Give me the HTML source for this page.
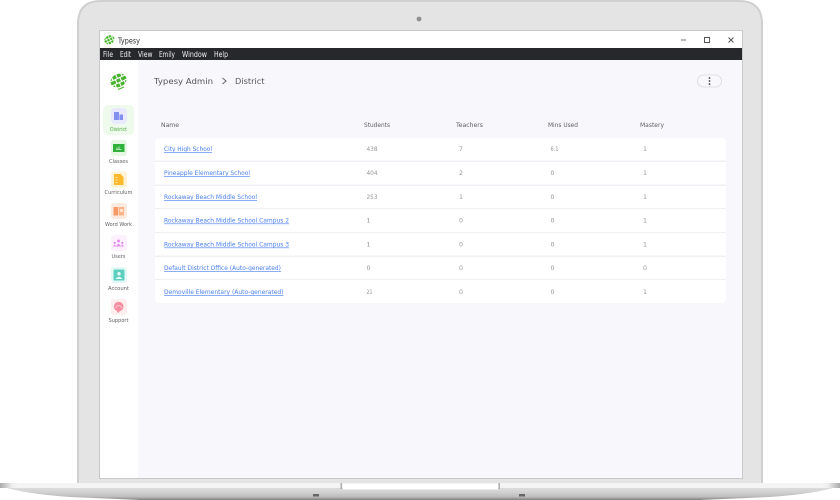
<!DOCTYPE html>
<html><head><meta charset="utf-8"><style>
html,body{margin:0;padding:0;background:#fff;width:840px;height:500px;overflow:hidden}
svg{display:block;filter:blur(.25px)}
text{font-family:"DejaVu Sans","Liberation Sans",sans-serif}
.lnk{fill:#4a7ff0;font-size:6.3px;text-decoration:underline}
.h{fill:#5f5f66;font-size:6.3px}
.c{fill:#96969a;font-size:6.3px}
.s{fill:#5f5f63;font-size:5.3px;text-anchor:middle}
.m{fill:#f0f0f2;font-size:7.6px}
</style></head><body>
<svg width="840" height="500" viewBox="0 0 840 500" xmlns="http://www.w3.org/2000/svg">
<defs>
<linearGradient id="base" x1="0" y1="0" x2="0" y2="1"><stop offset="0" stop-color="#e6e6e6"/><stop offset=".5" stop-color="#d2d2d2"/><stop offset=".8" stop-color="#bcbcbc"/><stop offset="1" stop-color="#808080"/></linearGradient>
<linearGradient id="tipL" x1="0" y1="0" x2="1" y2="0"><stop offset="0" stop-color="#aaa"/><stop offset=".6" stop-color="#eee"/><stop offset="1" stop-color="#f6f6f6"/></linearGradient>
<linearGradient id="tipR" x1="1" y1="0" x2="0" y2="0"><stop offset="0" stop-color="#aaa"/><stop offset=".6" stop-color="#eee"/><stop offset="1" stop-color="#f6f6f6"/></linearGradient>
</defs>
<!-- lid -->
<path d="M78 484V24Q78 1 101 1H739Q762 1 762 24V484Z" fill="#e4e4e4" stroke="#d0d0d0" stroke-width="2"/>
<circle cx="419" cy="19" r="2.4" fill="#8e8e90"/>
<!-- screen -->
<rect x="99" y="30" width="644" height="449" fill="#c9c9c9"/>
<rect x="100" y="31" width="642" height="447" fill="#f7f7fc"/>
<rect x="100" y="31" width="642" height="17" fill="#fff"/>
<rect x="100" y="48" width="642" height="12" fill="#27282c"/>
<rect x="100" y="60" width="38" height="418" fill="#fff"/>
<!-- base -->
<path d="M0 484H840V486Q815 494 770 497L700 500H140L70 497Q25 494 0 486Z" fill="url(#base)"/>
<rect x="0" y="483" width="840" height="5" fill="#f4f4f4"/>
<rect x="0" y="483" width="20" height="5" fill="url(#tipL)"/>
<rect x="820" y="483" width="20" height="5" fill="url(#tipR)"/>
<rect x="343" y="484" width="155" height="5.5" fill="#fff"/>
<rect x="340.5" y="483" width="1.4" height="6" fill="#aaa"/>
<rect x="498.500" y="483" width="1.4" height="6" fill="#aaa"/>
<rect x="313" y="494" width="6" height="2.500" fill="#666"/>
<rect x="519" y="494" width="6" height="2.500" fill="#666"/>
<!-- title bar -->
<g transform="rotate(-25 109.500 40)">
<ellipse cx="109.500" cy="39.700" rx="5.300" ry="4.300" fill="#49b52f"/>
<path d="M103.500 38.300H115.500M103.500 41.200H115.500M107 35V45M110 35V45M113 35V45" stroke="#fff" stroke-width=".7"/>
</g>
<text x="118" y="43.300" font-size="8" fill="#333" textLength="22" lengthAdjust="spacingAndGlyphs">Typesy</text>
<path d="M681 40H686" stroke="#777" stroke-width="1"/>
<rect x="704.500" y="37.500" width="5" height="5" fill="none" stroke="#555" stroke-width="1"/>
<path d="M728.500 37.500L733.500 42.500M733.500 37.500L728.500 42.500" stroke="#555" stroke-width="1"/>
<!-- menu -->
<text class="m" x="103" y="57" textLength="10" lengthAdjust="spacingAndGlyphs">File</text>
<text class="m" x="120" y="57" textLength="11" lengthAdjust="spacingAndGlyphs">Edit</text>
<text class="m" x="138" y="57" textLength="14.500" lengthAdjust="spacingAndGlyphs">View</text>
<text class="m" x="159" y="57" textLength="16" lengthAdjust="spacingAndGlyphs">Emily</text>
<text class="m" x="182" y="57" textLength="25" lengthAdjust="spacingAndGlyphs">Window</text>
<text class="m" x="214" y="57" textLength="14" lengthAdjust="spacingAndGlyphs">Help</text>
<!-- logo -->
<g transform="rotate(-25 118.500 80.500)">
<ellipse cx="118.500" cy="80.500" rx="8.300" ry="6.500" fill="#49b52f"/>
<path d="M109 78.300H128M109 82.700H128M113.500 72V78M118.500 72V78M123.500 72V78M116 78V83M121 78V83M113.500 83V89M118.500 83V89M123.500 83V89" stroke="#fff" stroke-width="1.100"/>
</g>
<path d="M118 89.500L124 87" stroke="#49b52f" stroke-width="1.200"/>
<!-- breadcrumb -->
<text x="154" y="84" font-size="8.300" fill="#55555a" textLength="59" lengthAdjust="spacingAndGlyphs">Typesy Admin</text>
<path d="M222.500 78L226 81L222.500 84" fill="none" stroke="#66666a" stroke-width="1"/>
<text x="235" y="84" font-size="8.300" fill="#55555a" textLength="29.500" lengthAdjust="spacingAndGlyphs">District</text>
<!-- kebab -->
<rect x="697.500" y="75" width="24" height="12" rx="6" fill="#f7f7fc" stroke="#d8d8dc" stroke-width=".8"/>
<circle cx="709.500" cy="78" r=".9" fill="#444"/><circle cx="709.500" cy="81" r=".9" fill="#444"/><circle cx="709.500" cy="84" r=".9" fill="#444"/>
<!-- sidebar active -->
<rect x="103" y="105" width="31" height="30" rx="5" fill="#eefaec"/>
<!-- District -->
<rect x="111" y="108" width="16" height="16" rx="4" fill="#e8e9fe"/>
<path d="M114 112H119V120H114ZM119.500 114.500H123V120H119.500Z" fill="#8490f0"/>
<text class="s" x="118.500" y="131" style="fill:#4aa63a" textLength="17" lengthAdjust="spacingAndGlyphs">District</text>
<!-- Classes -->
<rect x="111" y="140" width="16" height="16" rx="3" fill="#e4f8e2"/>
<rect x="113" y="144" width="11.500" height="8" fill="#30b13c"/>
<path d="M116 149.500H121.500M117 147.500V149M119 146.500V149" stroke="#d8f5d8" stroke-width=".8"/>
<text class="s" x="118.500" y="163" textLength="19" lengthAdjust="spacingAndGlyphs">Classes</text>
<!-- Curriculum -->
<rect x="111" y="171.500" width="16" height="16" rx="3" fill="#fff3d6"/>
<path d="M114 174H120.500L123.500 177V185H114Z" fill="#fdb92e"/>
<path d="M115.500 177.500H117.500M115.500 180H117.500M115.500 182.500H117.500" stroke="#fff0c8" stroke-width=".7"/>
<text class="s" x="118.500" y="194" textLength="28" lengthAdjust="spacingAndGlyphs">Curriculum</text>
<!-- Word Work -->
<rect x="111" y="203" width="16" height="16" rx="3" fill="#fdeadf"/>
<path d="M113.500 207H118.300V215.500H113.500Z" fill="#f59a66"/>
<path d="M119 207H124V215.500H119Z" fill="#f8b58a"/>
<rect x="120" y="209" width="3" height="3" fill="#fde0cc"/>
<text class="s" x="118.500" y="226" textLength="27" lengthAdjust="spacingAndGlyphs">Word Work</text>
<!-- Users -->
<rect x="111" y="235" width="16" height="16" rx="3" fill="#fdf0ff"/>
<g fill="#e58bf0"><circle cx="118.500" cy="241" r="1.500"/><path d="M116 246.500Q118.500 241.500 121 246.500Z"/><circle cx="114.700" cy="243" r="1.100"/><path d="M113 246.500Q114.700 243 116 246.500Z"/><circle cx="122.300" cy="243" r="1.100"/><path d="M121 246.500Q122.300 243 124 246.500Z"/></g>
<text class="s" x="118.500" y="258" textLength="14" lengthAdjust="spacingAndGlyphs">Users</text>
<!-- Account -->
<rect x="111" y="267" width="16" height="16" rx="3" fill="#e3f9f7"/>
<rect x="113.500" y="269.500" width="11" height="11" rx="1" fill="#5ccfc1"/>
<circle cx="119" cy="273.700" r="1.700" fill="#e3f9f7"/>
<path d="M115.500 279Q119 274.500 122.500 279Z" fill="#e3f9f7"/>
<text class="s" x="118.500" y="290" textLength="21" lengthAdjust="spacingAndGlyphs">Account</text>
<!-- Support -->
<rect x="111" y="299" width="16" height="16" rx="3" fill="#feeeee"/>
<circle cx="118.700" cy="306.500" r="4.800" fill="#f78fa3"/>
<path d="M115.500 308Q118.700 303 122 308" fill="none" stroke="#fdd4dc" stroke-width=".8"/>
<path d="M116.500 311L118 313L120 311Z" fill="#f78fa3"/>
<text class="s" x="118.500" y="322" textLength="20" lengthAdjust="spacingAndGlyphs">Support</text>
<!-- header -->
<text class="h" x="161" y="127" textLength="18" lengthAdjust="spacingAndGlyphs">Name</text>
<text class="h" x="364" y="127" textLength="26" lengthAdjust="spacingAndGlyphs">Students</text>
<text class="h" x="456" y="127" textLength="27" lengthAdjust="spacingAndGlyphs">Teachers</text>
<text class="h" x="548" y="127" textLength="30" lengthAdjust="spacingAndGlyphs">Mins Used</text>
<text class="h" x="640" y="127" textLength="24" lengthAdjust="spacingAndGlyphs">Mastery</text>
<!-- table -->
<rect x="155" y="138" width="571" height="165" rx="4" fill="#fff"/>
<g fill="#f0f0f4">
<rect x="155" y="160.500" width="571" height="1.500"/><rect x="155" y="184.500" width="571" height="1.500"/><rect x="155" y="208" width="571" height="1"/><rect x="155" y="232" width="571" height="1"/><rect x="155" y="255.500" width="571" height="1.500"/><rect x="155" y="279" width="571" height="1"/>
</g>
<text class="lnk" x="164" y="151" textLength="48" lengthAdjust="spacingAndGlyphs">City High School</text>
<text class="lnk" x="164" y="175" textLength="86" lengthAdjust="spacingAndGlyphs">Pineapple Elementary School</text>
<text class="lnk" x="164" y="199" textLength="93" lengthAdjust="spacingAndGlyphs">Rockaway Beach Middle School</text>
<text class="lnk" x="164" y="222.500" textLength="125" lengthAdjust="spacingAndGlyphs">Rockaway Beach Middle School Campus 2</text>
<text class="lnk" x="164" y="246.500" textLength="125" lengthAdjust="spacingAndGlyphs">Rockaway Beach Middle School Campus 3</text>
<text class="lnk" x="164" y="270" textLength="117" lengthAdjust="spacingAndGlyphs">Default District Office (Auto-generated)</text>
<text class="lnk" x="164" y="294" textLength="119.500" lengthAdjust="spacingAndGlyphs">Demoville Elementary (Auto-generated)</text>
<g class="rows">
<text class="c" x="366.500" y="151" textLength="11" lengthAdjust="spacingAndGlyphs">438</text><text class="c" x="459" y="151">7</text><text class="c" x="550.500" y="151" textLength="8" lengthAdjust="spacingAndGlyphs">6.1</text><text class="c" x="643" y="151">1</text>
<text class="c" x="366.500" y="175" textLength="11" lengthAdjust="spacingAndGlyphs">404</text><text class="c" x="459" y="175">2</text><text class="c" x="550.500" y="175">0</text><text class="c" x="643" y="175">1</text>
<text class="c" x="366.500" y="199" textLength="11" lengthAdjust="spacingAndGlyphs">253</text><text class="c" x="459" y="199">1</text><text class="c" x="550.500" y="199">0</text><text class="c" x="643" y="199">1</text>
<text class="c" x="366.500" y="222.500">1</text><text class="c" x="459" y="222.500">0</text><text class="c" x="550.500" y="222.500">0</text><text class="c" x="643" y="222.500">1</text>
<text class="c" x="366.500" y="246.500">1</text><text class="c" x="459" y="246.500">0</text><text class="c" x="550.500" y="246.500">0</text><text class="c" x="643" y="246.500">1</text>
<text class="c" x="366.500" y="270">0</text><text class="c" x="459" y="270">0</text><text class="c" x="550.500" y="270">0</text><text class="c" x="643" y="270">0</text>
<text class="c" x="366.500" y="294" textLength="6" lengthAdjust="spacingAndGlyphs">21</text><text class="c" x="459" y="294">0</text><text class="c" x="550.500" y="294">0</text><text class="c" x="643" y="294">1</text>
</g>
</svg>
</body></html>
